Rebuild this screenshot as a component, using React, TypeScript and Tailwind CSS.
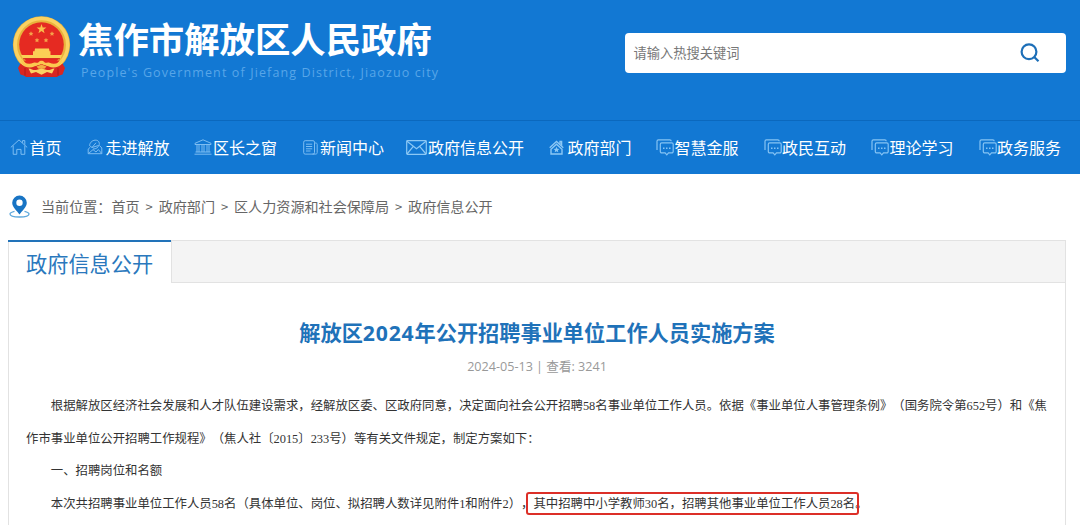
import React from 'react';

const HomeIcon = () => (
  <svg width="18" height="16" viewBox="0 0 18 16" fill="none" stroke="#7dbdf2" strokeWidth="1">
    <path d="M0.8 8.4 9 0.9l8.2 7.5" />
    <path d="M3.2 6.6v8.7h3.6v-4.9h4.2v4.9h3.8V6.6" />
    <path d="M12.6 3.8V1.6h2.2v4.2" />
  </svg>
);

const VisitIcon = () => (
  <svg width="16" height="16" viewBox="0 0 16 16" fill="none" stroke="#7dbdf2" strokeWidth="1">
    <path d="M2.5 6.5C3 3 6 .8 9.3 1.2c2.3.3 3.5 2.4 2.9 4.6C11.5 8.3 9 10.2 6 10" />
    <path d="M2.5 6.5 5 8.500l4-4.700M5 8.500l6.500-2" />
    <path d="M12.5 6.5 14.8 9v5.700H1.200V10l2-1.700" />
    <path d="M1.5 14.5 6 10.600l3 2.400 2.300-2.500 3.400 4" />
  </svg>
);

const BankIcon = () => (
  <svg width="18" height="16" viewBox="0 0 18 16" fill="none" stroke="#7dbdf2" strokeWidth="1">
    <path d="M1 5.5V4.300L9 .8l8 3.500v1.200z" />
    <path d="M3 6v7M5 6v7M8 6v7M10 6v7M13 6v7M15 6v7" />
    <path d="M1.5 13h15M.5 15.200h17" />
  </svg>
);

const NewsIcon = () => (
  <svg width="15" height="15" viewBox="0 0 15 15" fill="none" stroke="#7dbdf2" strokeWidth="1">
    <rect x="0.7" y="0.7" width="10.8" height="13.4" rx="1.5" />
    <path d="M11.5 3h1.200c.9 0 1.500.6 1.500 1.500v8.100c0 .9-.6 1.500-1.500 1.500H9.500" />
    <path d="M3 4.200h6.200M3 6.500h6.200M3 8.800h6.200M3 11h4.500" />
  </svg>
);

const MailIcon = () => (
  <svg width="21" height="15" viewBox="0 0 21 15" fill="none" stroke="#8cc8f5" strokeWidth="1.2">
    <rect x="0.7" y="0.7" width="19.6" height="13.6" rx="0.8" />
    <path d="m1 1.200 9.500 7.600L20 1.200M1 14l6.300-7.600M20 14l-6.300-7.600" />
  </svg>
);

const DeptIcon = () => (
  <svg width="15" height="15" viewBox="0 0 15 15" fill="none" stroke="#8cc8f5" strokeWidth="1.4">
    <path d="M.7 7.700 7.500 1.500l6.800 6.200" />
    <path d="M2 9.300 7.500 4.300 13 9.300V14H2z" />
    <path d="M11 4.300V1.500h1.600v4.200" />
    <path d="m7.500 6.800.9 1.900 2 .2-1.500 1.400.4 2-1.800-1-1.800 1 .4-2-1.500-1.400 2-.2z" fill="#8cc8f5" stroke="none" />
  </svg>
);

const ChatIcon = () => (
  <svg width="18" height="17" viewBox="0 0 18 17" fill="none" stroke="#85c3f4" strokeWidth="1.2">
    <path d="M1 11V2.200A1.400 1.400 0 0 1 2.400.8h11.400a1.400 1.400 0 0 1 1.400 1.400" />
    <path d="M5.700 3.900h10.100a1.400 1.400 0 0 1 1.400 1.400v7.200a1.400 1.400 0 0 1-1.400 1.400h-3.300l-1.700 1.900-1.700-1.900H5.700a1.400 1.400 0 0 1-1.400-1.400V5.300a1.400 1.400 0 0 1 1.400-1.400z" />
    <path d="M7 9.300h1.500M10 9.300h1.500M13 9.300h1.500" strokeWidth="1.500" />
  </svg>
);

const Emblem = () => (
  <svg width="62" height="66" viewBox="0 0 62 66">
    <path d="M10 47 9 57.500l6 5.500h31l6-5.500L51 47z" fill="#cf2420" />
    <circle cx="30.5" cy="30.800" r="28.600" fill="#e9b23c" />
    <circle cx="30.5" cy="30.800" r="26.200" fill="none" stroke="#fbd262" strokeWidth="3.500" />
    <circle cx="30.5" cy="30.500" r="22.300" fill="#e52a22" />
    <path d="m30.5 10 1.200 3.500h3.700l-2.900 2.200 1.100 3.500-3.100-2.200-3.100 2.200 1.100-3.500-2.900-2.200h3.700z" fill="#f9bf4c" />
    <path
      d="m20 17.200.7 1.500 1.700.2-1.200 1.200.3 1.600-1.500-.8-1.500.8.3-1.600-1.200-1.200 1.700-.2zM41 17.200l.7 1.500 1.700.2-1.200 1.200.3 1.600-1.500-.8-1.500.8.3-1.600-1.200-1.200 1.700-.2zM26 23.700l.7 1.500 1.700.2-1.200 1.200.3 1.600-1.500-.8-1.500.8.3-1.600-1.200-1.200 1.700-.2zM35 23.700l.7 1.500 1.700.2-1.200 1.200.3 1.600-1.500-.8-1.500.8.3-1.600-1.200-1.200 1.700-.2z"
      fill="#f5a24a"
    />
    <path d="M24 34.500h14l.5 2.800h-15zM22 37.300h17.500V41H51l-1.300 3.300H11.800L10 41h12z" fill="#fbcf55" />
    <path d="M12 44.800h37" stroke="#cf2420" strokeWidth="1" />
    <path d="M12.500 46.500h10.500l4.500 1.300 3-1.300 3 1.300 4.500-1.300h10.500l-5 6.500H17.500z" fill="#e52a22" />
    <path d="M9.500 44.500c4 5 8 6.500 13 4.300 2.500-1 3.500 1 5-.6 1-1.200 2-1.400 3-1.400s2 .2 3 1.400c1.500 1.600 2.500-.4 5 .6 5 2.200 9 .7 13-4.300l-1.500 5.500c-4 4-9 4-13 2.500l-6.500-2.300-6.500 2.300c-4 1.500-9 1.500-13-2.500z" fill="#fbc94f" />
    <path d="M9.500 49.500c4 4 9 5 14 3l7-2.200 7 2.200c5 2 10 1 14-3l2.500 4.500-2.500 6.500-6 2H15.500l-6-2L7 54z" fill="#d92621" />
    <path d="M25.500 52.500 30.500 50.500l5 2-2 2.300h-6z" fill="#f3ae42" />
    <path d="M17.500 54.500c3 .3 5 2 7.500 1.500l5.500-1.500 5.500 1.500c2.500.5 4.500-1.200 7.500-1.500L41 59.500l-5-1.500-5.500 2.800L25 58l-5 1.500z" fill="#fbd262" />
    <path d="M14 54v7.500M47 54v7.500" stroke="#ae1b1b" strokeWidth="1" />
  </svg>
);

const PinIcon = () => (
  <svg width="21" height="23" viewBox="0 0 21 23">
    <path d="M5.500 16.300C2.800 16.900 1 17.800 1 19c0 1.700 4 3 9.500 3s9.500-1.300 9.500-3c0-1.200-1.800-2.100-4.500-2.700" fill="none" stroke="#5fa9dc" strokeWidth="1.300" />
    <path fillRule="evenodd" d="M10.500.5A7.300 7.300 0 0 0 3.200 7.800c0 4.600 5 8.300 7.300 11.700 2.300-3.400 7.300-7.100 7.300-11.700A7.300 7.300 0 0 0 10.500.5zm0 4a3.200 3.200 0 1 1 0 6.400 3.200 3.200 0 0 1 0-6.400z" fill="#1874c4" />
  </svg>
);

const navItems = [
  { label: '首页', icon: <HomeIcon />, width: 'w-[77px]', slot: 'w-[19.5px]' },
  { label: '走进解放', icon: <VisitIcon />, width: 'w-[107px]', slot: 'w-[18.5px]' },
  { label: '区长之窗', icon: <BankIcon />, width: 'w-[109px]', slot: 'w-[19px]' },
  { label: '新闻中心', icon: <NewsIcon />, width: 'w-[103px]', slot: 'w-[17px]' },
  { label: '政府信息公开', icon: <MailIcon />, width: 'w-[143px]', slot: 'w-[22px]' },
  { label: '政府部门', icon: <DeptIcon />, width: 'w-[107px]', slot: 'w-[18.5px]' },
  { label: '智慧金服', icon: <ChatIcon />, width: 'w-[107.5px]', slot: 'w-[18.5px]' },
  { label: '政民互动', icon: <ChatIcon />, width: 'w-[107.5px]', slot: 'w-[18.5px]' },
  { label: '理论学习', icon: <ChatIcon />, width: 'w-[107.5px]', slot: 'w-[18.5px]' },
  { label: '政务服务', icon: <ChatIcon />, width: 'w-[100px]', slot: 'w-[18.5px]' },
];

const crumbs = ['首页', '政府部门', '区人力资源和社会保障局', '政府信息公开'];

const Header = () => (
  <header className="bg-[#1278d3] h-[173.5px] text-white">
    <div className="flex justify-between h-[120px] pl-[11px] pr-[14px]">
      <div className="flex">
        <div className="pt-[14px]">
          <Emblem />
        </div>
        <div className="pl-[5px] pt-[16px]">
          <h1 className="text-[35.4px] leading-[44px] font-bold whitespace-nowrap">焦作市解放区人民政府</h1>
          <p className="pl-[3px] pt-[4px] text-[12.5px] leading-[17px] tracking-[1.12px] text-[#58a6e8] whitespace-nowrap font-['Open_Sans','Noto_Sans',sans-serif]">
            People's Government of Jiefang District, Jiaozuo city
          </p>
        </div>
      </div>
      <div className="mt-[33px] flex h-[40px] w-[441px] items-center justify-between rounded bg-white pl-[8.5px] pr-[26px]">
        <span className="text-[13.25px] text-[#777]">请输入热搜关键词</span>
        <svg width="20" height="20" viewBox="0 0 20 20" fill="none" stroke="#1d6fb8" strokeWidth="2.2">
          <circle cx="9" cy="8.7" r="7.400" />
          <path d="m14 13.700 4.500 4.500" />
        </svg>
      </div>
    </div>
    <nav className="flex h-[53px] items-center border-t border-[#0b68bd] pl-[10px]">
      {navItems.map((item) => (
        <a key={item.label} className={`flex shrink-0 items-center ${item.width}`}>
          <span className={`shrink-0 ${item.slot}`}>{item.icon}</span>
          <span className="pb-px text-[16px] leading-6 whitespace-nowrap">{item.label}</span>
        </a>
      ))}
    </nav>
  </header>
);

const App = () => {
  return (
    <div className="h-[525px] w-[1080px] overflow-hidden bg-white font-['Noto_Sans_CJK_SC',sans-serif] [text-spacing-trim:space-all]">
      <Header />

      <div className="flex h-[66.5px] items-center pl-[9px] text-[14.1px] text-[#666] whitespace-nowrap">
        <PinIcon />
        <span className="ml-[11px]">当前位置：</span>
        {crumbs.map((crumb, index) => (
          <React.Fragment key={crumb}>
            {index > 0 && <span className="w-[19px] text-center text-[13px]">&gt;</span>}
            <span>{crumb}</span>
          </React.Fragment>
        ))}
      </div>

      <main className="ml-[8px] h-[300px] w-[1058px] border-x border-[#e2e2e2]">
        <div className="flex h-[43px]">
          <h2 className="-ml-px w-[163px] shrink-0 border-t-2 border-[#2273b9] pl-[18px] text-[21.2px] leading-[42px] text-[#2a78bd] whitespace-nowrap">
            政府信息公开
          </h2>
          <div className="flex-1 border-y border-l border-[#e2e2e2] bg-[#f4f4f4]"></div>
        </div>

        <h3 className="mt-[33px] text-center text-[21.2px] leading-[32px] font-bold text-[#1f72b9]">
          解放区<span className="tracking-[0.8px] font-['Noto_Sans',sans-serif]">2024</span>年公开招聘事业单位工作人员实施方案
        </h3>
        <p className="mt-[8px] text-center text-[12.6px] leading-[20px] text-[#999] font-['Open_Sans','Noto_Sans_CJK_SC',sans-serif]">
          2024-05-13 | 查看: 3241
        </p>

        <article className="mt-[13px] px-[17px] text-[12.39px] leading-[32.5px] text-[#333] whitespace-nowrap font-['Liberation_Serif','Noto_Sans_CJK_SC',serif]">
          <p className="indent-[2em]">
            根据解放区经济社会发展和人才队伍建设需求，经解放区委、区政府同意，决定面向社会公开招聘58名事业单位工作人员。依据《事业单位人事管理条例》（国务院令第652号）和《焦
            <br />
            作市事业单位公开招聘工作规程》（焦人社〔2015〕233号）等有关文件规定，制定方案如下：
          </p>
          <p className="indent-[2em]">一、招聘岗位和名额</p>
          <p className="indent-[2em]">
            本次共招聘事业单位工作人员58名（具体单位、岗位、拟招聘人数详见附件1和附件2），
            <span className="relative inline-block indent-0">
              其中招聘中小学教师30名，招聘其他事业单位工作人员28名
              <span className="absolute -left-[7px] -right-[4px] top-[4px] h-[23px] rounded-[3px] border-[2.5px] border-[#dc2f28]"></span>
            </span>
            。
          </p>
        </article>
      </main>
    </div>
  );
};

export default App;
